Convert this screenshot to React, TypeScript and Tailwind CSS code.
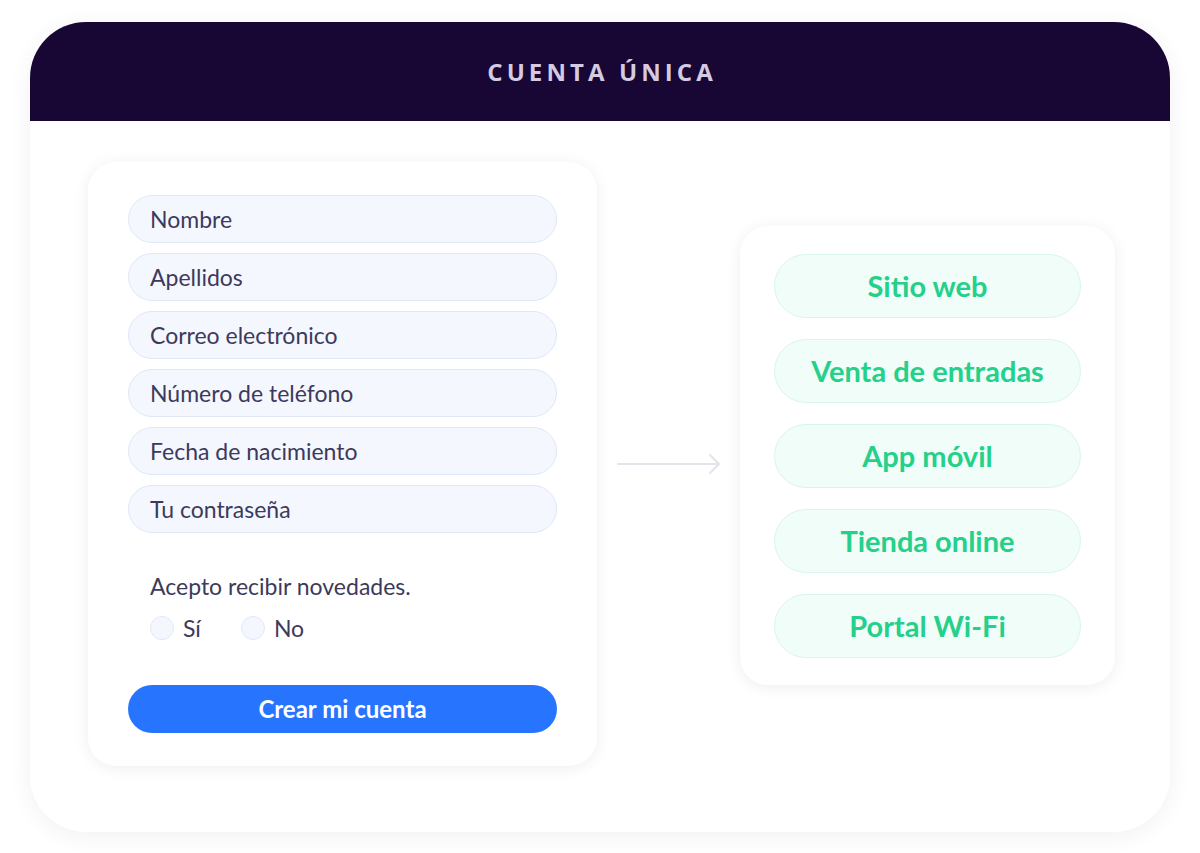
import { ReactNode } from 'react';

const fields = [
  'Nombre',
  'Apellidos',
  'Correo electrónico',
  'Número de teléfono',
  'Fecha de nacimiento',
  'Tu contraseña',
];

const channels = ['Sitio web', 'Venta de entradas', 'App móvil', 'Tienda online', 'Portal Wi-Fi'];

export default function App() {
  return (
    <div className="min-h-screen bg-white pt-[22px] font-['Lato','Noto_Sans',sans-serif]">
      <div className="mx-[30px] h-[810px] overflow-hidden rounded-[56px] bg-white shadow-[0_4px_24px_rgba(20,10,60,0.06)]">
        <header className="flex h-[99px] items-center justify-center bg-[#180635]">
          <h1 className="pl-[0.17em] font-['Open_Sans',sans-serif] text-[24px] font-bold tracking-[0.17em] text-[#d4cbe0]">
            CUENTA ÚNICA
          </h1>
        </header>

        <div className="flex items-start pl-[58px] pt-[41px]">
          <SignupCard />

          <div className="flex h-[604px] w-[143px] items-center justify-center">
            <ArrowRight />
          </div>

          <div className="mt-[64px] flex w-[375px] flex-col gap-[21px] rounded-[28px] bg-white px-[34px] pb-[27px] pt-[28px] shadow-[0_2px_16px_rgba(20,10,60,0.07)]">
            {channels.map((name) => (
              <div
                key={name}
                className="flex h-[64px] items-center justify-center rounded-full border border-[#d9f6ea] bg-[#f1fdf8] text-[29px] font-bold text-[#24d08a]"
              >
                {name}
              </div>
            ))}
          </div>
        </div>
      </div>
    </div>
  );
}

function SignupCard() {
  return (
    <div className="flex h-[604px] w-[509px] flex-col rounded-[28px] bg-white px-[40px] pt-[33px] shadow-[0_2px_16px_rgba(20,10,60,0.07)]">
      <div className="flex flex-col gap-[10px]">
        {fields.map((label) => (
          <div
            key={label}
            className="flex h-[48px] items-center rounded-full border border-[#dee8f8] bg-[#f4f7fe] pl-[21px] text-[23px] text-[#3d3a5c]"
          >
            {label}
          </div>
        ))}
      </div>

      <p className="mt-[39px] pl-[22px] text-[23px] leading-[28px] text-[#3d3a5c]">Acepto recibir novedades.</p>

      <div className="mt-[14px] flex items-center gap-[40px] pl-[22px]">
        <Radio>Sí</Radio>
        <Radio>No</Radio>
      </div>

      <button className="mt-[43px] flex h-[48px] items-center justify-center rounded-full bg-[#2775ff] text-[24px] font-bold text-white">
        Crear mi cuenta
      </button>
    </div>
  );
}

function Radio({ children }: { children: ReactNode }) {
  return (
    <label className="flex items-center gap-[9px] text-[23px] leading-[28px] text-[#3d3a5c]">
      <span className="h-[24px] w-[24px] rounded-full border border-[#e1e8f8] bg-[#f4f7fe]" />
      {children}
    </label>
  );
}

function ArrowRight() {
  return (
    <svg width="104" height="22" viewBox="0 0 104 22" fill="none">
      <path d="M1 11H102M93 2l9 9-9 9" stroke="#e4e4ea" strokeWidth="2" strokeLinecap="round" strokeLinejoin="round" />
    </svg>
  );
}
